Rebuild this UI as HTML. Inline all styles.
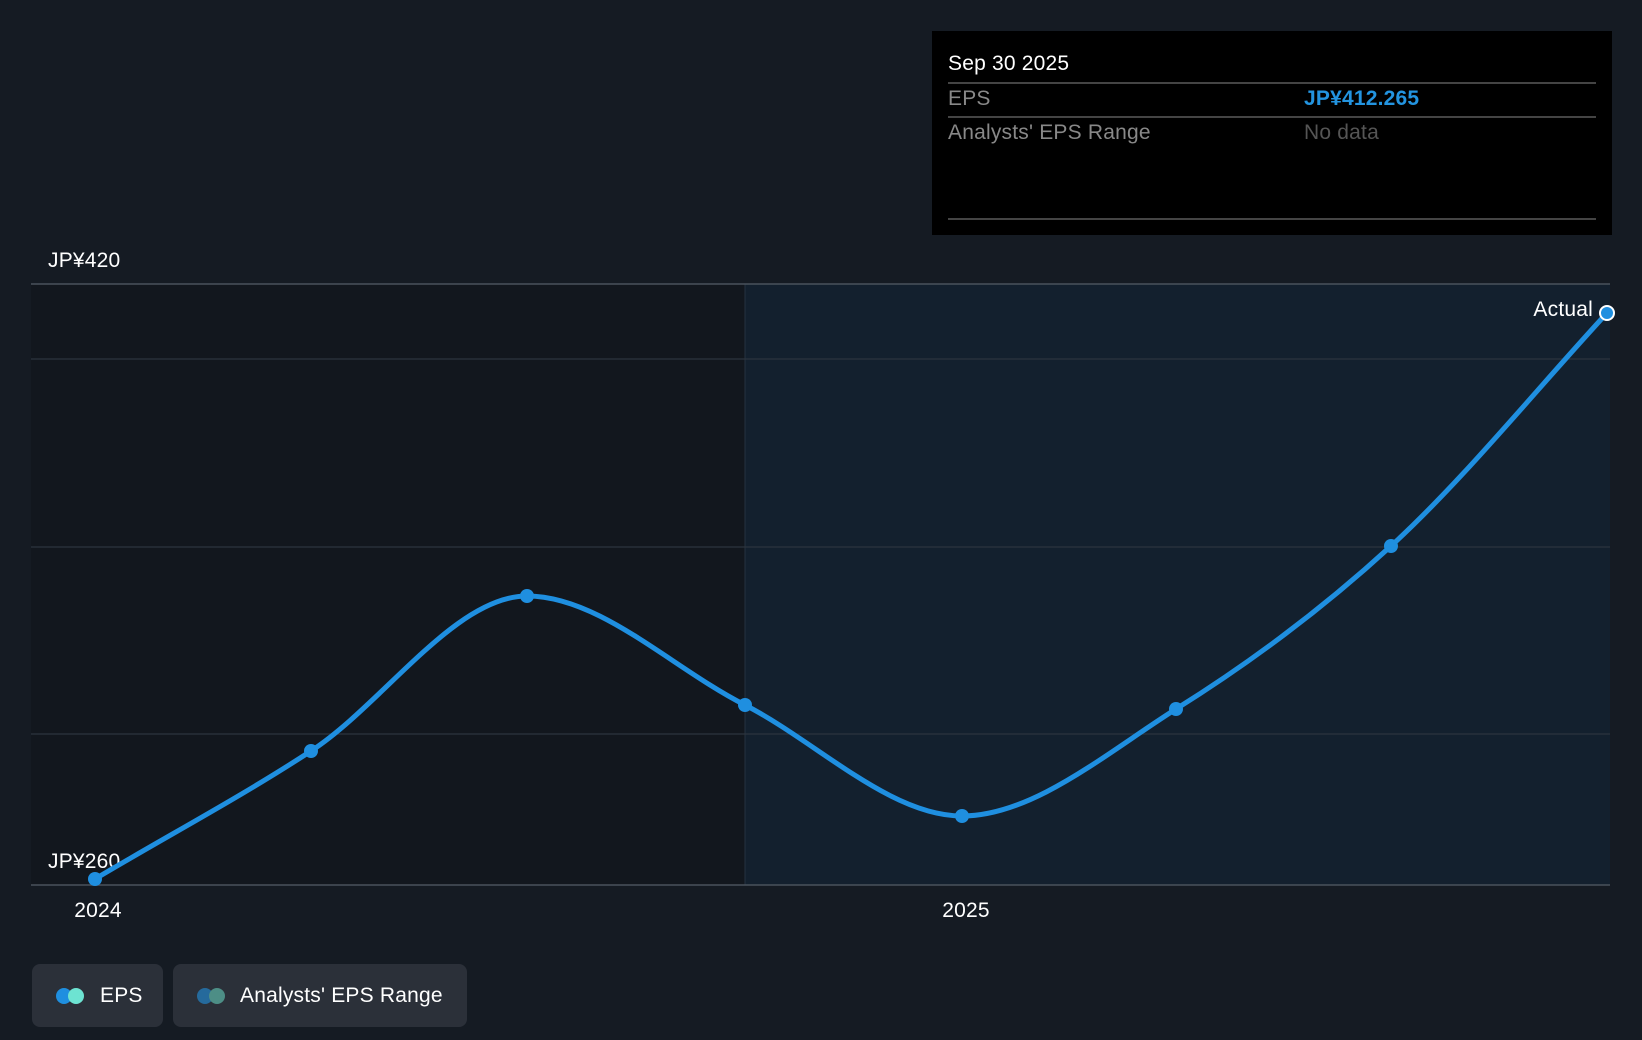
<!DOCTYPE html>
<html><head><meta charset="utf-8"><style>
html,body{margin:0;padding:0;background:#151b23;}
body{width:1642px;height:1040px;overflow:hidden;position:relative;font-family:"Liberation Sans","Noto Sans CJK JP",sans-serif;}
svg{position:absolute;left:0;top:0}
.btn{position:absolute;top:964px;height:63px;background:#2b3039;border-radius:8px;color:#fff;font-size:21px;line-height:63px;letter-spacing:0.2px}
.dot{position:absolute;top:24px;width:16px;height:16px;border-radius:50%}
</style></head><body>
<svg width="1642" height="1040" font-family="Liberation Sans, Noto Sans CJK JP, sans-serif" letter-spacing="0.2">
<rect x="31" y="284" width="714" height="601" fill="#12171e"/>
<rect x="745" y="284" width="865" height="601" fill="#13202e"/>
<line x1="745" y1="284" x2="745" y2="885" stroke="#243240" stroke-width="1"/>
<line x1="31" y1="284" x2="1610" y2="284" stroke="#4a525c" stroke-width="1.5"/>
<line x1="31" y1="359" x2="1610" y2="359" stroke="#2c343e" stroke-width="1.2"/>
<line x1="31" y1="547" x2="1610" y2="547" stroke="#2c343e" stroke-width="1.2"/>
<line x1="31" y1="734" x2="1610" y2="734" stroke="#2c343e" stroke-width="1.2"/>
<line x1="31" y1="885" x2="1610" y2="885" stroke="#4a525c" stroke-width="1.5"/>
<text x="48" y="267" fill="#fff" font-size="21">JP¥420</text>
<text x="48" y="868" fill="#fff" font-size="21">JP¥260</text>
<text x="98" y="917" fill="#fff" font-size="21" text-anchor="middle">2024</text>
<text x="966" y="917" fill="#fff" font-size="21" text-anchor="middle">2025</text>
<path d="M95,879 C167,836 239,798 311,751 C383,704 455,596 527,596 C600,596 672,668 745,705 C817,742 890,816 962,816 C1033,816 1105,754 1176,709 C1248,664 1319,612 1391,546 C1463,480 1535,391 1607,313" fill="none" stroke="#1f8fe0" stroke-width="5"/>
<g fill="#1f8fe0">
<circle cx="95" cy="879" r="7"/><circle cx="311" cy="751" r="7"/><circle cx="527" cy="596" r="7"/><circle cx="745" cy="705" r="7"/><circle cx="962" cy="816" r="7"/><circle cx="1176" cy="709" r="7"/><circle cx="1391" cy="546" r="7"/>
</g>
<circle cx="1607" cy="313" r="7" fill="#1f8fe0" stroke="#fff" stroke-width="2"/>
<text x="1593" y="316" fill="#fff" font-size="21" text-anchor="end">Actual</text>
<rect x="932" y="31" width="680" height="204" fill="#000"/>
<text x="948" y="70" fill="#fff" font-size="21">Sep 30 2025</text>
<line x1="948" y1="83" x2="1596" y2="83" stroke="#444" stroke-width="2"/>
<text x="948" y="105" fill="#888" font-size="21">EPS</text>
<text x="1304" y="105" fill="#2394e0" font-size="21" font-weight="bold">JP¥412.265</text>
<line x1="948" y1="117" x2="1596" y2="117" stroke="#444" stroke-width="2"/>
<text x="948" y="139" fill="#888" font-size="21">Analysts' EPS Range</text>
<text x="1304" y="139" fill="#555" font-size="21">No data</text>
<line x1="948" y1="219" x2="1596" y2="219" stroke="#444" stroke-width="2"/>
</svg>
<div class="btn" style="left:32px;width:131px">
<div class="dot" style="left:24px;background:#1f8fe0"></div><div class="dot" style="left:36px;background:#6de3d2"></div>
<span style="position:absolute;left:68px">EPS</span></div>
<div class="btn" style="left:173px;width:294px">
<div class="dot" style="left:24px;background:#256a9c"></div><div class="dot" style="left:36px;background:#4d8e86"></div>
<span style="position:absolute;left:67px">Analysts' EPS Range</span></div>
</body></html>
